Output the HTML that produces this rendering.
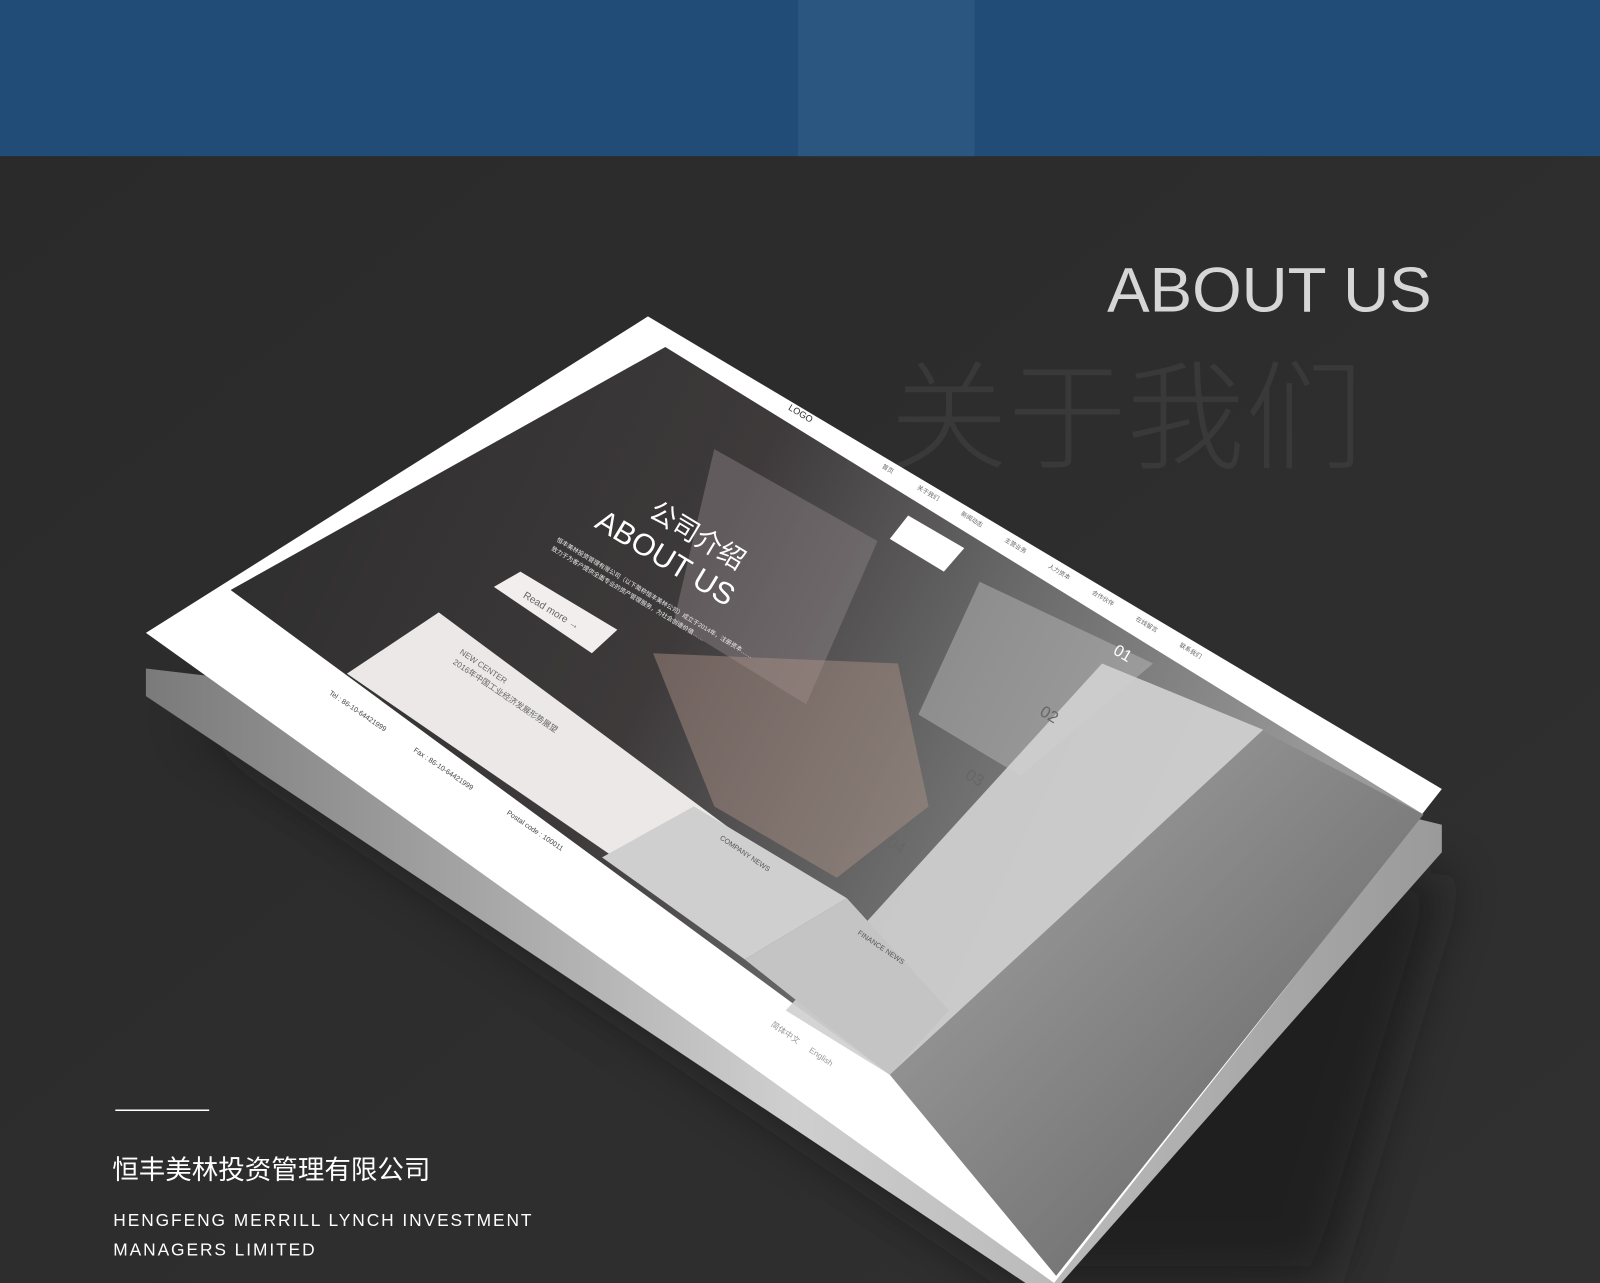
<!DOCTYPE html>
<html><head><meta charset="utf-8"><style>
html,body{margin:0;padding:0;background:#2b2b2b;}
svg{display:block;}
</style></head><body>
<svg width="1600" height="1283" viewBox="0 0 1568 1257" preserveAspectRatio="none" xmlns="http://www.w3.org/2000/svg" font-family="Liberation Sans, Noto Sans CJK SC, sans-serif">
<defs>
<linearGradient id="bg" x1="0" y1="0" x2="1" y2="1"><stop offset="0" stop-color="#2a2a2a"/><stop offset="1" stop-color="#303030"/></linearGradient>
<linearGradient id="photo" x1="0" y1="0" x2="1" y2="0.3"><stop offset="0" stop-color="#2c2c2c"/><stop offset="0.45" stop-color="#3e3a3b"/><stop offset="0.7" stop-color="#6a6a6a"/><stop offset="1" stop-color="#9a9a9a"/></linearGradient>
<linearGradient id="suit" x1="0" y1="0" x2="1" y2="1"><stop offset="0" stop-color="#a8a8a8"/><stop offset="1" stop-color="#5e5e5e"/></linearGradient>
<linearGradient id="back" x1="0" y1="0" x2="1" y2="0"><stop offset="0" stop-color="#7a7a7a"/><stop offset="0.5" stop-color="#cfcfcf"/><stop offset="1" stop-color="#9a9a9a"/></linearGradient>
<filter id="sh" x="-20%" y="-20%" width="140%" height="140%"><feGaussianBlur stdDeviation="25"/></filter>
</defs>
<rect width="1568" height="1257" fill="url(#bg)"/>
<rect width="1568" height="153" fill="#214c77"/>
<rect x="782" width="173" height="153" fill="#2a5680"/>
<text x="1085" y="305" font-size="62" fill="#d6d6d6" textLength="318" lengthAdjust="spacingAndGlyphs">ABOUT  US</text>
<text x="872" y="450" font-size="116" fill="#393939" font-weight="300">关于我们</text>
<polygon points="180,700 1000,1257 1300,1257 1420,860" fill="#141414" opacity="0.6" filter="url(#sh)"/>
<polygon points="143,655 143,682 1005,1257 1040,1257 1413,835 1413,808 1380,800" fill="url(#back)"/>
<polygon points="635,310 1413,773 1033,1257 143,620" fill="#ffffff"/>
<polygon points="652,340 1395,798 872,1053 226,578" fill="url(#photo)"/>
<polygon points="700,440 860,530 790,690 660,610" fill="#8f8589" opacity="0.45"/>
<polygon points="640,640 880,650 910,790 820,860 700,790" fill="#b0948a" opacity="0.45"/>
<polygon points="960,570 1130,650 1000,760 900,700" fill="#b8b8b8" opacity="0.5"/>
<polygon points="1235,715 1395,798 1035,1250 872,1053" fill="url(#suit)"/>
<polygon points="1080,650 1238,715 872,1053 770,990" fill="#d0d0d0" opacity="0.92"/>
<polygon points="340,660 430,600 740,830 660,880" fill="#ece8e8"/>
<polygon points="590,840 680,790 830,880 730,940" fill="#cfcfcf"/>
<polygon points="730,940 830,880 930,990 872,1053" fill="#c4c4c4"/>
<g transform="translate(772,401) rotate(31)" fill="#333" font-size="9"><text>LOGO</text></g>
<g transform="translate(864,458) rotate(31)" fill="#666" font-size="6">
<text x="0">首页</text><text x="40">关于我们</text><text x="90">新闻动态</text><text x="140">主营业务</text><text x="190">人力资本</text><text x="240">合作伙伴</text><text x="290">在线留言</text><text x="340">联系我们</text></g>
<polygon points="890,505 945,537 925,560 872,528" fill="#ffffff"/>
<g transform="translate(600,485) rotate(31)" fill="#ffffff">
<text font-size="26" x="40" y="0">公司介绍</text>
<text font-size="30" x="0" y="36">ABOUT US</text></g>
<polygon points="484,575 510,560 605,617 580,640" fill="#f2eeee"/>
<g transform="translate(512,585) rotate(31)" fill="#666" font-size="10"><text>Read more →</text></g>
<g transform="translate(545,530) rotate(31)" fill="#eeeeee" font-size="6">
<text>恒丰美林投资管理有限公司（以下简称恒丰美林公司）成立于2014年，注册资本……</text>
<text y="10">致力于为客户提供全面专业的资产管理服务，为社会创造价值……</text></g>
<g transform="translate(450,640) rotate(34)" fill="#666" font-size="8">
<text>NEW CENTER</text><text y="12">2016年中国工业经济发展形势展望</text></g>
<g transform="translate(322,680) rotate(34)" fill="#444" font-size="7">
<text>Tel : 86-10-64421999</text><text x="100">Fax : 86-10-64421999</text><text x="210">Postal code : 100011</text></g>
<g transform="translate(1090,640) rotate(31)" fill="#fff" font-size="16"><text>01</text></g>
<g transform="translate(1018,700) rotate(31)" fill="#666" font-size="16"><text>02</text></g>
<g transform="translate(945,762) rotate(31)" fill="#666" font-size="16"><text>03</text></g>
<g transform="translate(868,828) rotate(31)" fill="#666" font-size="16"><text>04</text></g>
<g transform="translate(705,822) rotate(34)" fill="#555" font-size="7"><text>COMPANY NEWS</text></g>
<g transform="translate(840,915) rotate(34)" fill="#555" font-size="7"><text>FINANCE NEWS</text></g>
<g transform="translate(755,1005) rotate(34)" fill="#999" font-size="8"><text>简体中文</text><text x="45">English</text></g>
<rect x="113" y="1087" width="92" height="1.5" fill="#ffffff"/>
<text x="110" y="1155" font-size="26" fill="#ffffff">恒丰美林投资管理有限公司</text>
<text x="111" y="1201" font-size="17" fill="#ffffff" letter-spacing="1.9">HENGFENG MERRILL LYNCH INVESTMENT</text>
<text x="111" y="1230" font-size="17" fill="#ffffff" letter-spacing="1.9">MANAGERS LIMITED</text>
</svg>
</body></html>
